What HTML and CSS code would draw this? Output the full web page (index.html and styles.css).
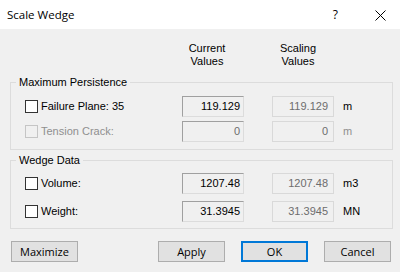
FILE: index.html
```html
<!DOCTYPE html>
<html lang="en">
<head>
    <meta charset="UTF-8">
    <title>Scale Wedge</title>
    <link rel="stylesheet" href="styles.css">
</head>
<body>

<div class="titlebar">
    <span class="title">Scale Wedge</span>
    <span class="help">?</span>
    <svg class="close" width="11" height="11" viewBox="0 0 11 11">
        <path d="M0.5 0.5L10.5 10.5M10.5 0.5L0.5 10.5" stroke="#000" stroke-width="1" fill="none"/>
    </svg>
</div>

<div class="dialog">
    <div class="headers">
        <div class="colhead">Current<br>Values</div>
        <div class="colhead scaling-head">Scaling<br>Values</div>
    </div>

    <fieldset class="group">
        <legend>Maximum Persistence</legend>
        <div class="rows persistence">
            <div class="row">
                <label class="check"><span class="box"></span>Failure Plane: 35</label>
                <div class="field current">119.129</div>
                <div class="field scaling">119.129</div>
                <span class="unit">m</span>
            </div>
            <div class="row disabled">
                <label class="check"><span class="box"></span>Tension Crack:</label>
                <div class="field current">0</div>
                <div class="field scaling">0</div>
                <span class="unit">m</span>
            </div>
        </div>
    </fieldset>

    <fieldset class="group wedge">
        <legend>Wedge Data</legend>
        <div class="rows wedge-rows">
            <div class="row">
                <label class="check"><span class="box"></span>Volume:</label>
                <div class="field current">1207.48</div>
                <div class="field scaling">1207.48</div>
                <span class="unit">m3</span>
            </div>
            <div class="row">
                <label class="check"><span class="box"></span>Weight:</label>
                <div class="field current">31.3945</div>
                <div class="field scaling">31.3945</div>
                <span class="unit">MN</span>
            </div>
        </div>
    </fieldset>

    <div class="buttons">
        <button>Maximize</button>
        <span class="spacer"></span>
        <button>Apply</button>
        <button class="default">OK</button>
        <button>Cancel</button>
    </div>
</div>

</body>
</html>
```

FILE: styles.css
```css
body {
    margin: 0;
    width: 400px;
    height: 272px;
    background-color: #f0f0f0;
    font-family: 'Liberation Sans', Arial, sans-serif;
    font-size: 11px;
    line-height: 13px;
    color: #000;
    overflow: hidden;
}

.titlebar {
    height: 29px;
    background-color: #fff;
    display: flex;
    align-items: center;
}

.title {
    flex: 1;
    padding-left: 7px;
    font-family: 'Open Sans', sans-serif;
    font-size: 11.5px;
}

.help {
    font-family: 'Open Sans', sans-serif;
    font-size: 12px;
    margin-right: 37px;
}

.close {
    margin-right: 14px;
    margin-top: 1px;
}

.headers {
    display: flex;
    padding: 13px 0 0 176px;
}

.colhead {
    width: 62px;
    text-align: center;
}

.scaling-head {
    margin-left: 29px;
}

.group {
    margin: 8px 7px 0 10px;
    padding: 0;
    border: 1px solid #dcdcdc;
    min-width: 0;
}

.group.wedge {
    margin-top: 4px;
}

legend {
    margin-left: 5px;
    padding: 0 3px;
    line-height: 13px;
}

.rows {
    display: flex;
    flex-direction: column;
    padding: 7px 0 7px 14px;
    gap: 4px;
}

.wedge-rows {
    padding: 6px 0 6px 14px;
    gap: 7px;
}

.row {
    display: flex;
    align-items: center;
    height: 21px;
}

.check {
    width: 157px;
    display: flex;
    align-items: center;
}

.box {
    width: 11px;
    height: 11px;
    border: 1px solid #333;
    background-color: #fff;
    margin-right: 3px;
}

.field {
    width: 62px;
    height: 21px;
    box-sizing: border-box;
    text-align: right;
    line-height: 18px;
    background-color: #f0f0f0;
}

.field.current {
    border: 1px solid;
    border-color: #a0a0a0 #dcdcdc #dcdcdc #a0a0a0;
    padding-right: 3px;
}

.field.scaling {
    margin-left: 28px;
    border: 1px solid #d9d9d9;
    padding-right: 5px;
    color: #6d6d6d;
}

.unit {
    margin-left: 9px;
}

.disabled .check,
.disabled .unit {
    color: #8f8f8f;
}

.disabled .box {
    border-color: #c5c5c5;
    background-color: #f0f0f0;
}

.disabled .field.current {
    color: #6d6d6d;
}

.buttons {
    display: flex;
    gap: 16px;
    margin-top: 12px;
    padding: 0 9px 0 11px;
}

.spacer {
    flex: 1;
}

button {
    width: 67px;
    height: 21px;
    padding: 0;
    background-color: #e1e1e1;
    border: 1px solid #adadad;
    font-family: 'Open Sans', sans-serif;
    font-size: 11px;
    color: #000;
}

button.default {
    border: 2px solid #0078d7;
}
```
